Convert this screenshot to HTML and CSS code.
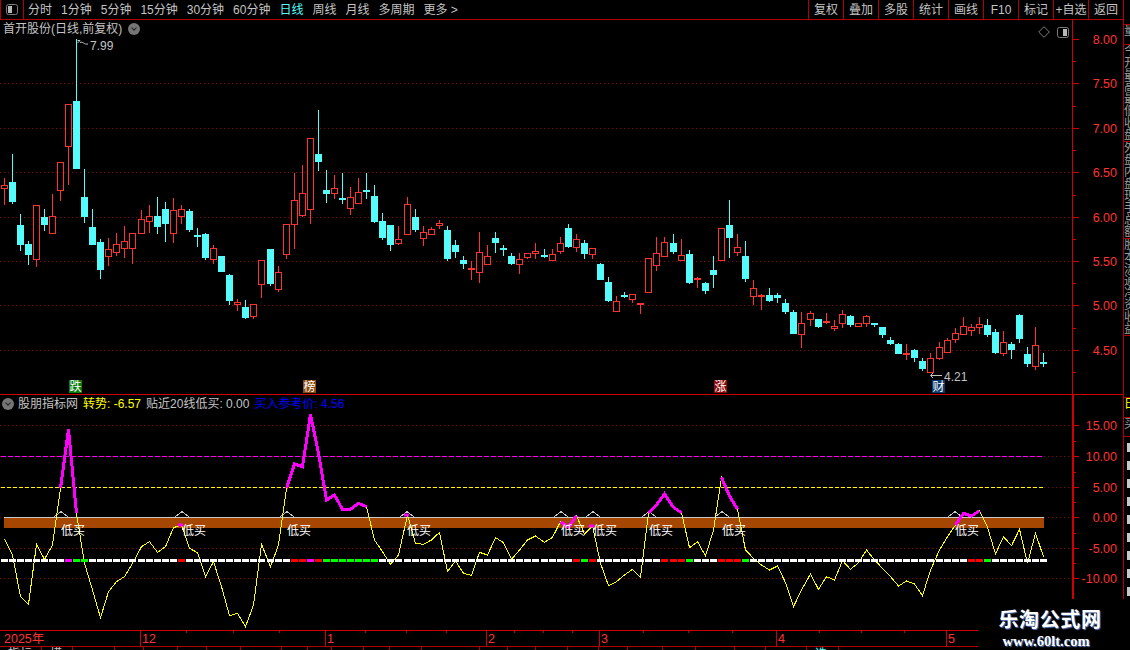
FILE: index.html
```html
<!DOCTYPE html>
<html lang="zh-CN">
<head>
  <meta charset="UTF-8" />
  <title>首开股份 日线</title>
  <link rel="stylesheet" href="styles.css">
</head>
<body>
  <div class="terminal">
    <div class="desk">
      <div class="toolbar">
        <button class="panel-toggle">
          <svg width="12" height="11" viewBox="0 0 12 11"><rect class="frame" x="0.5" y="0.5" width="11" height="10" rx="2"/><rect class="frame-fill" x="2" y="2" width="4" height="7"/></svg>
        </button>
        <nav class="periods">
          <a>分时</a><a>1分钟</a><a>5分钟</a><a>15分钟</a><a>30分钟</a><a>60分钟</a>
          <a class="active">日线</a><a>周线</a><a>月线</a><a>多周期</a><a>更多 &gt;</a>
        </nav>
        <div class="actions">
          <a>复权</a><a>叠加</a><a>多股</a><a>统计</a><a>画线</a><a>F10</a><a>标记</a><a>+自选</a><a>返回</a>
        </div>
      </div>

      <section class="panel price-panel">
        <svg id="priceChart" width="1123" height="374" viewBox="0 20 1123 374"></svg>
        <div class="legend">
          <span>首开股份(日线,前复权)</span>
          <i class="chevron"></i>
        </div>
        <div class="corner-tools">
          <svg width="12" height="12" viewBox="0 0 12 12"><path class="frame" d="M6 .7 11.3 6 6 11.3 .7 6Z"/></svg>
          <svg width="12" height="11" viewBox="0 0 12 11"><rect class="frame" x="0.5" y="0.5" width="11" height="10" rx="2"/><rect class="frame-fill" x="6" y="2" width="4" height="7"/></svg>
        </div>
      </section>

      <section class="panel indicator-panel">
        <svg id="indicatorChart" width="1123" height="235" viewBox="0 395 1123 235"></svg>
        <div class="legend legend-wide">
          <i class="chevron"></i>
          <span>股朋指标网</span>
          <span class="yellow">转势: -6.57</span>
          <span>贴近20线低买: 0.00</span>
          <span class="blue">买入参考价: 4.56</span>
        </div>
      </section>

      <svg id="dateBar" class="date-bar" width="1123" height="16" viewBox="0 630 1123 16"></svg>

      <div class="tabs">
        <span style="width:42px">指标</span><span style="width:31px">模板</span><span style="width:42px"></span><span style="width:29px"></span><span style="width:34px"></span><span style="width:29px"></span><span style="width:34px"></span><span style="width:41px"></span><span style="width:26px"></span><span style="width:24px"></span><span style="width:32px"></span><span style="width:26px"></span><span style="width:32px"></span><span style="width:58px"></span><span style="width:28px"></span><span style="width:28px"></span><span style="width:32px"></span><span style="width:31px"></span><span style="width:29px"></span><span style="width:35px"></span><span style="width:33px"></span><span style="width:39px"></span><span style="width:31px"></span><span style="width:41px"></span><span class="tab-cyan" style="width:32px">选股</span>
      </div>
    </div>

    <aside class="rail">
      <div class="rail-cell" style="height:25px"></div>
      <div class="rail-cell" style="height:20px">量</div>
      <div class="rail-cell" style="height:97px">今开最高最低收盘</div>
      <div class="rail-cell" style="height:97px">外盘内盘现手总额</div>
      <div class="rail-cell" style="height:97px">股本流通净资收益</div>
      <div class="rail-cell" style="height:62px"></div>
      <div class="rail-cell yellow" style="height:20px">日</div>
      <div class="rail-cell" style="height:19px">买</div>
      <div class="rail-blocks"></div>
    </aside>
  </div>

  <div class="watermark">
    <strong>乐淘公式网</strong>
    <span>www.60lt.com</span>
  </div>

  <script src="script.js"></script>
</body>
</html>
```

FILE: styles.css
```css
:root {
  --line: #b00000;
  --line-bright: #d00000;
  --red: #ff3232;
  --cyan: #54fcfc;
  --text: #c4c4c4;
  --magenta: #ff00ff;
  --yellow: #ffff00;
}
html, body {
  margin: 0;
  height: 100%;
  background: #000;
  overflow: hidden;
}
body {
  position: relative;
  font-family: "Liberation Sans", "Noto Sans CJK SC", sans-serif;
  font-size: 12px;
  color: var(--text);
}
.terminal {
  display: flex;
  width: 1130px;
  height: 650px;
}
.desk {
  width: 1123px;
  display: flex;
  flex-direction: column;
}
.desk > * {
  flex: none;
}

/* top bar */
.toolbar {
  display: flex;
  align-items: stretch;
  height: 19px;
  border-bottom: 1px solid var(--line);
  line-height: 20px;
}
.panel-toggle {
  width: 24px;
  padding: 0;
  background: none;
  border: none;
  border-left: 1px solid var(--line);
  border-right: 1px solid var(--line);
  display: flex;
  align-items: center;
  justify-content: center;
}
.periods {
  display: flex;
  gap: 9px;
  padding-left: 4px;
}
.periods .active {
  color: var(--cyan);
}
.actions {
  margin-left: auto;
  display: flex;
}
.actions a {
  width: 35px;
  box-sizing: border-box;
  border-left: 1px solid var(--line);
  text-align: center;
  white-space: nowrap;
}
.frame {
  fill: none;
  stroke: #7c7c7c;
}
.frame-fill {
  fill: #b8b8b8;
}

/* chart panels */
.panel {
  position: relative;
}
.panel svg {
  display: block;
}
.price-panel {
  height: 374px;
  border-bottom: 1px solid var(--line-bright);
}
.indicator-panel {
  height: 235px;
}
.legend {
  position: absolute;
  top: 2px;
  left: 3px;
  display: flex;
  align-items: center;
  gap: 6px;
  line-height: 14px;
  white-space: nowrap;
}
.legend-wide {
  left: 2px;
  gap: 5px;
}
.legend-wide .chevron {
  margin-right: -1px;
}
.yellow {
  color: var(--yellow);
}
.blue {
  color: #0000ff;
}
.chevron {
  width: 12px;
  height: 12px;
  border-radius: 50%;
  background: #757575;
  position: relative;
}
.chevron::after {
  content: "";
  position: absolute;
  left: 3.5px;
  top: 2.5px;
  width: 3px;
  height: 3px;
  border-right: 1.5px solid #222;
  border-bottom: 1.5px solid #222;
  transform: rotate(45deg);
}
.corner-tools {
  position: absolute;
  top: 6px;
  left: 1038px;
  display: flex;
  align-items: center;
  gap: 7px;
}
.date-bar {
  display: block;
  border-bottom: 1px solid var(--line);
}
.tabs {
  display: flex;
  height: 3px;
  overflow: hidden;
  line-height: 14px;
  font-size: 12px;
}
.tabs span {
  flex: none;
  box-sizing: border-box;
  border-right: 1px solid var(--line);
  padding-left: 8px;
}
.tabs .tab-cyan {
  color: var(--cyan);
}

/* svg parts */
.grid {
  stroke: #900000;
  stroke-dasharray: 1 3;
  shape-rendering: crispEdges;
}
.axis {
  stroke: var(--line-bright);
  shape-rendering: crispEdges;
}
.axis-wide {
  stroke-width: 2;
}
.axis-label {
  fill: var(--red);
  font-size: 12.5px;
  text-anchor: end;
}
.date-label {
  fill: var(--red);
  font-size: 12.5px;
}
.wick-up {
  stroke: var(--red);
  shape-rendering: crispEdges;
}
.wick-down {
  stroke: var(--cyan);
  shape-rendering: crispEdges;
}
.body-up {
  fill: #000;
  stroke: var(--red);
  shape-rendering: crispEdges;
}
.body-down {
  fill: var(--cyan);
  shape-rendering: crispEdges;
}
.note {
  fill: var(--text);
  font-size: 12px;
}
.note-line {
  fill: none;
  stroke: var(--text);
}
.badge-text {
  fill: #fff;
  font-size: 12px;
  text-anchor: middle;
}
.level-magenta {
  stroke: var(--magenta);
  stroke-dasharray: 5 2;
  shape-rendering: crispEdges;
}
.level-yellow {
  stroke: var(--yellow);
  stroke-dasharray: 4 2;
  shape-rendering: crispEdges;
}
.zero-line {
  stroke: #c8c8c8;
  shape-rendering: crispEdges;
}
.zero-bar {
  fill: #a54700;
}
.trend {
  fill: none;
  stroke: var(--yellow);
  shape-rendering: crispEdges;
}
.trend-hot {
  fill: none;
  stroke: var(--magenta);
  stroke-width: 3;
  shape-rendering: crispEdges;
}
.bump {
  fill: none;
  stroke: #c8c8c8;
  shape-rendering: crispEdges;
}
.buy-label {
  fill: #fff;
  font-size: 12px;
}
.seg-white { fill: #fff; }
.seg-red { fill: #ff0000; }
.seg-green { fill: #00ff00; }
.seg-magenta { fill: var(--magenta); }

/* right edge, cut off by the window */
.rail {
  width: 7px;
  box-sizing: border-box;
  border-left: 1px solid var(--line);
  display: flex;
  flex-direction: column;
  overflow: hidden;
  color: #9c9c9c;
}
.rail-cell {
  flex: none;
  box-sizing: border-box;
  width: 6px;
  overflow: hidden;
  border-bottom: 1px solid var(--line);
  font-size: 12px;
  line-height: 12px;
  word-break: break-all;
}
.rail-blocks {
  flex: 1;
  margin: 6px 0 0 3px;
  background: repeating-linear-gradient(#c8c8c8 0 9px, #000 9px 18px);
}

.watermark {
  position: absolute;
  left: 978px;
  right: 0;
  top: 599px;
  bottom: 0;
  background: #000;
  display: flex;
  flex-direction: column;
  align-items: center;
  padding: 8px 8px 0 0;
  box-sizing: border-box;
  color: #fff;
  text-shadow: 1px 1px 1px #5c78b0;
}
.watermark strong {
  font-size: 20px;
  line-height: 26px;
  letter-spacing: 0.6px;
}
.watermark span {
  margin-right: 8px;
  font-family: "Liberation Serif", serif;
  font-weight: bold;
  font-size: 14.5px;
  line-height: 16px;
}
```

FILE: script.js
```javascript
// [bodyTop, bodyBottom, high, low] in page pixels, u = close above open
const candles = [
  ['u',185,189,178,205],['d',182,202,154,204],['d',225,245,214,251],['d',244,255,241,265],['u',205,260,205,267],
  ['d',217,225,209,231],['u',216,234,194,234],['u',162,191,162,201],['u',104,147,104,185],['d',101,169,39,169],
  ['d',197,217,169,223],['d',227,245,209,245],['d',242,270,239,279],['u',249,257,238,266],['u',244,253,233,256],
  ['u',241,249,226,258],['u',233,249,233,264],['u',219,234,210,234],['u',216,222,205,233],['d',216,227,197,234],
  ['d',209,224,202,242],['u',210,234,198,243],['u',209,217,205,224],['d',211,230,209,232],['d',235,236,228,247],
  ['d',234,258,233,260],['u',248,260,245,264],['d',256,272,256,272],['d',275,301,274,305],['u',302,305,299,311],
  ['d',307,318,300,319],['u',304,317,304,319],['u',260,285,260,298],['d',249,284,249,286],['u',272,290,266,292],
  ['u',224,255,224,259],['u',200,225,173,249],['u',193,216,165,217],['u',138,210,138,224],['d',154,162,110,171],
  ['d',190,194,170,203],['u',188,194,175,199],['d',198,199,173,204],['u',197,209,187,215],['u',192,204,178,204],
  ['d',190,192,173,199],['d',196,222,185,223],['d',221,238,213,240],['d',225,245,225,251],['u',239,244,226,245],
  ['u',204,235,197,235],['d',217,230,209,232],['u',232,239,226,246],['u',229,235,227,235],['u',223,226,220,229],
  ['d',230,259,226,261],['d',245,252,240,258],['d',260,264,256,269],['u',268,270,261,280],['u',252,273,232,283],
  ['u',256,265,245,265],['d',238,243,232,253],['d',248,250,245,256],['d',256,264,253,265],['u',259,265,253,274],
  ['u',253,258,253,259],['u',251,254,243,259],['d',255,257,249,258],['u',254,261,249,261],['u',243,252,237,254],
  ['d',228,247,224,248],['u',239,248,234,252],['d',243,254,240,259],['u',248,255,248,259],['d',264,280,263,280],
  ['d',282,301,277,302],['u',301,312,296,312],['d',295,297,292,298],['u',294,300,294,303],['u',303,305,303,314],
  ['u',258,293,258,293],['u',253,266,237,271],['u',242,257,237,257],['d',243,252,234,254],['u',255,261,239,261],
  ['d',254,283,250,284],['u',278,280,277,288],['d',283,291,282,294],['d',270,275,256,288],['u',228,261,228,261],
  ['d',225,238,200,258],['u',247,253,234,256],['d',256,279,241,282],['u',288,297,280,305],['u',295,296,294,310],
  ['d',295,301,288,302],['d',295,298,293,303],['d',303,312,299,314],['d',312,334,310,334],['u',323,335,312,348],
  ['u',313,320,311,326],['d',319,327,319,328],['u',321,323,313,324],['u',326,329,320,331],['u',314,324,310,328],
  ['d',316,325,315,327],['u',323,327,323,327],['u',316,324,315,327],['d',323,325,323,327],['d',327,335,327,338],
  ['d',340,344,337,345],['d',344,354,343,354],['u',353,355,344,360],['d',350,358,349,362],['d',361,369,358,371],
  ['u',358,373,353,373],['u',347,359,342,360],['u',340,353,338,353],['u',333,340,328,343],['u',326,335,317,335],
  ['u',327,331,324,336],['u',324,328,317,334],['d',325,335,319,337],['d',332,353,329,354],['u',342,354,331,356],
  ['d',344,350,342,359],['d',315,339,314,343],['d',354,364,347,367],['u',345,367,327,370],['d',362,364,353,367],
];

// indicator line, y = 390 + v / 3
const trendV = [
  448,495,620,643,463,508,465,295,118,370,520,600,683,605,575,560,520,470,455,487,
  470,413,405,475,488,560,515,590,677,670,710,645,463,530,465,295,222,230,73,190,
  330,315,358,358,340,350,450,485,523,495,375,460,463,450,427,545,513,550,556,487,
  495,443,458,508,480,450,438,457,442,395,412,377,432,408,520,587,575,555,538,562,
  370,345,312,352,368,473,455,498,420,262,318,358,480,505,525,540,528,578,650,600,
  552,598,560,570,512,538,518,480,510,535,560,588,573,582,617,540,480,440,405,370,
  378,362,412,492,440,467,418,520,430,500,
];
const hotSpans = [[7,9],[35,45],[69,71],[80,84],[89,91],[118,121]];
const hotDots = [[180,525],[406,515],[591,526]];
const buyMarks = [61,182,287,407,561,593,649,722,955];
const segColors = {
  8:'magenta',9:'green',10:'green',22:'red',36:'red',37:'red',38:'magenta',39:'red',
  40:'green',41:'green',42:'green',43:'green',44:'green',45:'green',46:'green',
  71:'red',72:'green',73:'red',82:'red',83:'red',84:'red',85:'green',
  89:'red',90:'red',91:'red',92:'green',120:'red',121:'red',122:'green',
};

// the terminal rounds its bar step, one extra pixel every 16 or 17 bars
const extraSteps = [17,33,50,67,83,100,116];
function barX(i) {
  return 4 + 8 * i + extraSteps.filter(s => s <= i).length;
}

const NS = 'http://www.w3.org/2000/svg';
function add(svg, tag, attrs, text) {
  const el = document.createElementNS(NS, tag);
  for (const k in attrs) el.setAttribute(k, attrs[k]);
  if (text !== undefined) el.textContent = text;
  svg.appendChild(el);
  return el;
}
function hline(svg, cls, x1, x2, y) {
  add(svg, 'line', { class: cls, x1, x2, y1: y + 0.5, y2: y + 0.5 });
}
function vline(svg, cls, x, y1, y2) {
  add(svg, 'line', { class: cls, x1: x + 0.5, x2: x + 0.5, y1, y2 });
}

function drawAxis(svg, ticks, labels, top, bottom, wide) {
  ticks.forEach(t => {
    hline(svg, 'axis', 1073, 1073 + (t.major ? 6 : 3), t.y);
  });
  vline(svg, wide ? 'axis axis-wide' : 'axis', 1072, top, bottom);
  labels.forEach(l => {
    add(svg, 'text', { class: 'axis-label', x: 1117, y: l.y + 4.5 }, l.text);
  });
}

function drawPrice() {
  const svg = document.getElementById('priceChart');
  const levels = [
    [39,'8.00'],[83,'7.50'],[128,'7.00'],[172,'6.50'],[217,'6.00'],[261,'5.50'],[305,'5.00'],[350,'4.50'],
  ];
  levels.slice(1).forEach(l => hline(svg, 'grid', 0, 1072, l[0]));

  candles.forEach((c, i) => {
    const x = barX(i);
    const [kind, top, bot, high, low] = c;
    const wick = kind === 'u' ? 'wick-up' : 'wick-down';
    if (high < top) vline(svg, wick, x, high, top);
    if (low > bot) vline(svg, wick, x, bot, low);
    if (kind === 'u') {
      add(svg, 'rect', { class: 'body-up', x: x - 2.5, y: top + 0.5, width: 6, height: Math.max(bot - top - 1, 1) });
    } else {
      add(svg, 'rect', { class: 'body-down', x: x - 3, y: top, width: 7, height: Math.max(bot - top, 2) });
    }
  });

  const ticks = [];
  levels.forEach((l, i) => {
    ticks.push({ y: l[0], major: true });
    if (i < levels.length - 1) ticks.push({ y: Math.round((l[0] + levels[i + 1][0]) / 2), major: false });
  });
  ticks.push({ y: 372, major: false });
  drawAxis(svg, ticks, levels.map(l => ({ y: l[0], text: l[1] })), 20, 394, false);

  // high / low notes
  add(svg, 'path', { class: 'note-line', d: 'M80 40.5 77.5 43M77.5 40.5H80M80 42.5C83 41 84 45 88 44' });
  add(svg, 'text', { class: 'note', x: 90, y: 50 }, '7.99');
  add(svg, 'path', { class: 'note-line', d: 'M933 373 930.5 375.5 933 378M931 375.5H942' });
  add(svg, 'text', { class: 'note', x: 944, y: 381 }, '4.21');

  // event badges along the bottom of the panel
  [[69,'#0a7a0a','跌'],[303,'#8a4a10','榜'],[714,'#8e0a0a','涨'],[932,'#0a3a6c','财']].forEach(b => {
    add(svg, 'rect', { x: b[0], y: 380, width: 13, height: 13, fill: b[1] });
    add(svg, 'text', { class: 'badge-text', x: b[0] + 6.5, y: 391 }, b[2]);
  });
}

function drawIndicator() {
  const svg = document.getElementById('indicatorChart');
  const levels = [[425,'15.00'],[456,'10.00'],[487,'5.00'],[517,'0.00'],[548,'-5.00'],[578,'-10.00']];
  levels.forEach(l => hline(svg, 'grid', 0, 1072, l[0]));

  hline(svg, 'level-magenta', 1, 1044, 456);
  hline(svg, 'level-yellow', 1, 1044, 487);
  add(svg, 'rect', { class: 'zero-bar', x: 4, y: 518, width: 1040, height: 10 });
  hline(svg, 'zero-line', 4, 1044, 517);

  buyMarks.forEach(x => {
    add(svg, 'path', { class: 'bump', d: `M${x - 7} 517 L${x} 511.5 L${x + 7} 517` });
  });

  const pts = trendV.map((v, i) => [barX(i) + 0.5, 390 + v / 3]);
  add(svg, 'polyline', { class: 'trend', points: pts.map(p => p.join(',')).join(' ') });
  hotSpans.forEach(s => {
    add(svg, 'polyline', { class: 'trend-hot', points: pts.slice(s[0], s[1] + 1).map(p => p.join(',')).join(' ') });
  });
  hotDots.forEach(d => {
    add(svg, 'rect', { class: 'seg-magenta', x: d[0] - 2, y: d[1] - 1.5, width: 5, height: 3 });
  });

  candles.forEach((c, i) => {
    add(svg, 'rect', { class: 'seg-' + (segColors[i] || 'white'), x: barX(i) - 3, y: 559, width: 7, height: 3 });
  });

  buyMarks.forEach(x => {
    add(svg, 'text', { class: 'buy-label', x, y: 535 }, '低买');
  });

  const ticks = [];
  levels.forEach((l, i) => {
    ticks.push({ y: l[0], major: true });
    if (i < levels.length - 1) ticks.push({ y: Math.round((l[0] + levels[i + 1][0]) / 2), major: false });
  });
  drawAxis(svg, ticks, levels.map(l => ({ y: l[0], text: l[1] })), 395, 630, true);
}

function drawDates() {
  const svg = document.getElementById('dateBar');
  hline(svg, 'axis', 0, 1123, 630);
  [186,233,279,365,406,446,514,543,572,643,688,732,819,861,904].forEach(x => vline(svg, 'axis', x, 631, 633));
  [[0,'2025年'],[140,'12'],[325,'1'],[486,'2'],[599,'3'],[776,'4'],[946,'5']].forEach(d => {
    if (d[0]) vline(svg, 'axis', d[0], 630, 646);
    add(svg, 'text', { class: 'date-label', x: d[0] + 2 + (d[0] ? 0 : 2), y: 643 }, d[1]);
  });
}

drawPrice();
drawIndicator();
drawDates();
```
